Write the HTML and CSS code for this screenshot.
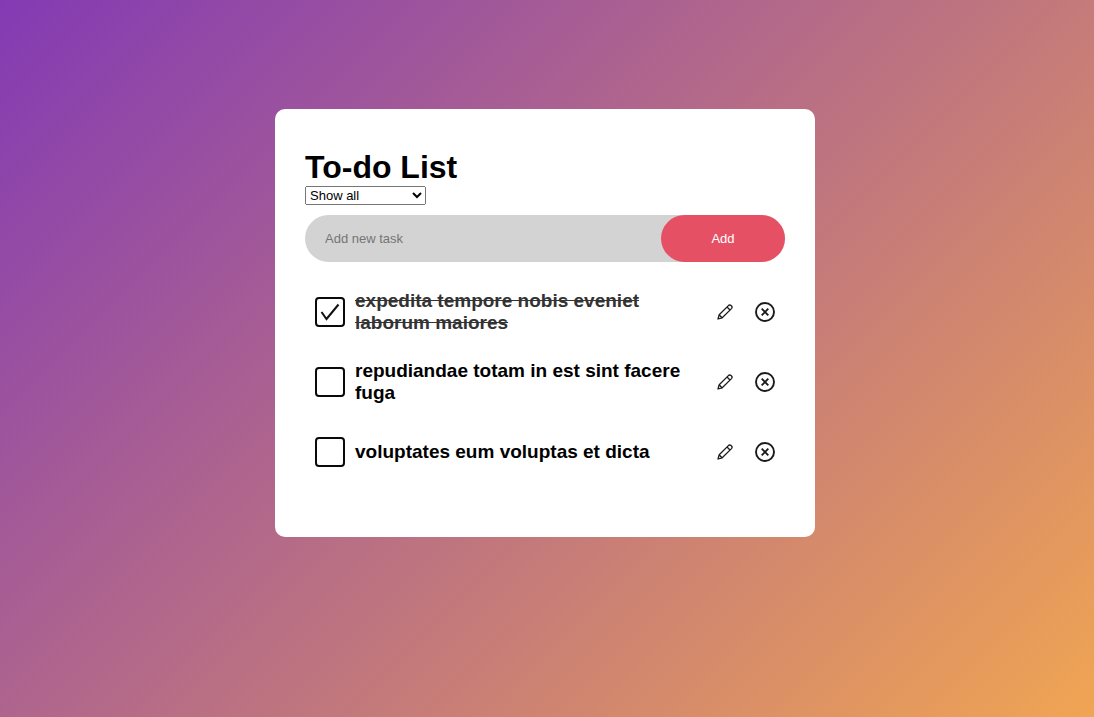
FILE: index.html
```html
<!DOCTYPE html>
<html lang="en">
<head>
<meta charset="utf-8">
<meta name="viewport" content="width=device-width, initial-scale=1">
<title>To-do List</title>
<link rel="stylesheet" href="styles.css">
</head>
<body>
<svg class="sprite" aria-hidden="true">
  <symbol id="pencil" viewBox="0 0 16 16"><g fill="none" stroke="currentColor" stroke-width="1.3" stroke-linejoin="round"><path d="M1 15l1.2-4.2L11.4 1.600q1.300-1.200 2.700 0l.4.4q1.200 1.300 0 2.600L5.200 13.800z"/><path d="M10 3l3 3M2.300 11l2.700 2.700"/></g></symbol>
  <symbol id="remove" viewBox="0 0 20 20"><g fill="none" stroke="currentColor" stroke-width="1.900"><circle cx="10" cy="10" r="9"/><path d="M6.700 6.700l6.600 6.600M13.300 6.700l-6.600 6.600"/></g></symbol>
  <symbol id="tick" viewBox="0 0 30 30"><path d="M6.500 15l5 7L23.500 7.500" fill="none" stroke="currentColor" stroke-width="2"/></symbol>
</svg>
<main class="card">
  <h1 class="title">To-do List</h1>
  <select class="filter" aria-label="Filter tasks">
    <option>Show all</option>
    <option>Show completed</option>
  </select>
  <form class="add-form">
    <input class="add-input" type="text" placeholder="Add new task" aria-label="New task">
    <button class="add-button" type="button">Add</button>
  </form>
  <ul class="tasks">
    <li class="task">
      <span class="check"><input class="box" type="checkbox" id="t1" checked><svg class="tick"><use href="#tick"/></svg></span>
      <label class="name" for="t1">expedita tempore nobis eveniet laborum maiores</label>
      <button class="action" type="button" aria-label="Edit"><svg class="pencil"><use href="#pencil"/></svg></button>
      <button class="action" type="button" aria-label="Delete"><svg class="remove"><use href="#remove"/></svg></button>
    </li>
    <li class="task">
      <span class="check"><input class="box" type="checkbox" id="t2"><svg class="tick"><use href="#tick"/></svg></span>
      <label class="name" for="t2">repudiandae totam in est sint facere fuga</label>
      <button class="action" type="button" aria-label="Edit"><svg class="pencil"><use href="#pencil"/></svg></button>
      <button class="action" type="button" aria-label="Delete"><svg class="remove"><use href="#remove"/></svg></button>
    </li>
    <li class="task">
      <span class="check"><input class="box" type="checkbox" id="t3"><svg class="tick"><use href="#tick"/></svg></span>
      <label class="name" for="t3">voluptates eum voluptas et dicta</label>
      <button class="action" type="button" aria-label="Edit"><svg class="pencil"><use href="#pencil"/></svg></button>
      <button class="action" type="button" aria-label="Delete"><svg class="remove"><use href="#remove"/></svg></button>
    </li>
  </ul>
</main>
</body>
</html>
```
FILE: styles.css
```css
* {
  box-sizing: border-box;
  margin: 0;
  padding: 0;
}

body {
  min-height: 100vh;
  padding: 10px 14px 10px 10px;
  font-family: "Liberation Sans", Arial, sans-serif;
  background: linear-gradient(135deg, #833ab4, #f0a553);
}

.sprite {
  position: absolute;
  width: 0;
  height: 0;
}

.card {
  width: 100%;
  max-width: 540px;
  margin: 99px auto 20px;
  padding: 40px 30px 50px;
  background: #fff;
  border-radius: 10px;
}

.title {
  font-size: 32px;
  line-height: 37px;
}

.filter {
  display: block;
  width: 121px;
  height: 19px;
  font-family: inherit;
  font-size: 13px;
}

.add-form {
  display: flex;
  margin: 10px 0 15px;
  background: #d3d3d3;
  border-radius: 30px;
}

.add-input {
  flex: 1;
  min-width: 0;
  padding: 16px 20px;
  border: 0;
  outline: 0;
  background: transparent;
  font-family: inherit;
  font-size: 13px;
  line-height: 15px;
}

.add-button {
  width: 124px;
  padding: 16px 20px;
  border: 0;
  border-radius: 40px;
  background: #e65064;
  color: #fff;
  font-family: inherit;
  font-size: 13px;
  line-height: 15px;
}

.tasks {
  list-style: none;
}

.task {
  display: flex;
  align-items: center;
  min-height: 70px;
  padding: 0 10px;
}

.check {
  position: relative;
  flex: none;
  width: 30px;
  height: 30px;
  margin-right: 10px;
}

.box {
  display: block;
  width: 30px;
  height: 30px;
  appearance: none;
  border: 2px solid #0a0a0a;
  border-radius: 4px;
}

.tick {
  position: absolute;
  inset: 0;
  width: 30px;
  height: 30px;
  color: #111;
  visibility: hidden;
  pointer-events: none;
}

.box:checked + .tick {
  visibility: visible;
}

.name {
  flex: 1;
  padding-right: 10px;
  font-size: 19px;
  font-weight: bold;
  line-height: 22px;
}

.task:has(.box:checked) .name {
  color: #333;
  text-decoration: line-through;
}

.action {
  display: flex;
  align-items: center;
  justify-content: center;
  width: 20px;
  height: 20px;
  margin-left: 20px;
  border: 0;
  background: none;
  color: #1a1a1a;
}

.pencil {
  width: 16px;
  height: 16px;
}

.remove {
  flex: none;
  width: 20px;
  height: 20px;
}
```
